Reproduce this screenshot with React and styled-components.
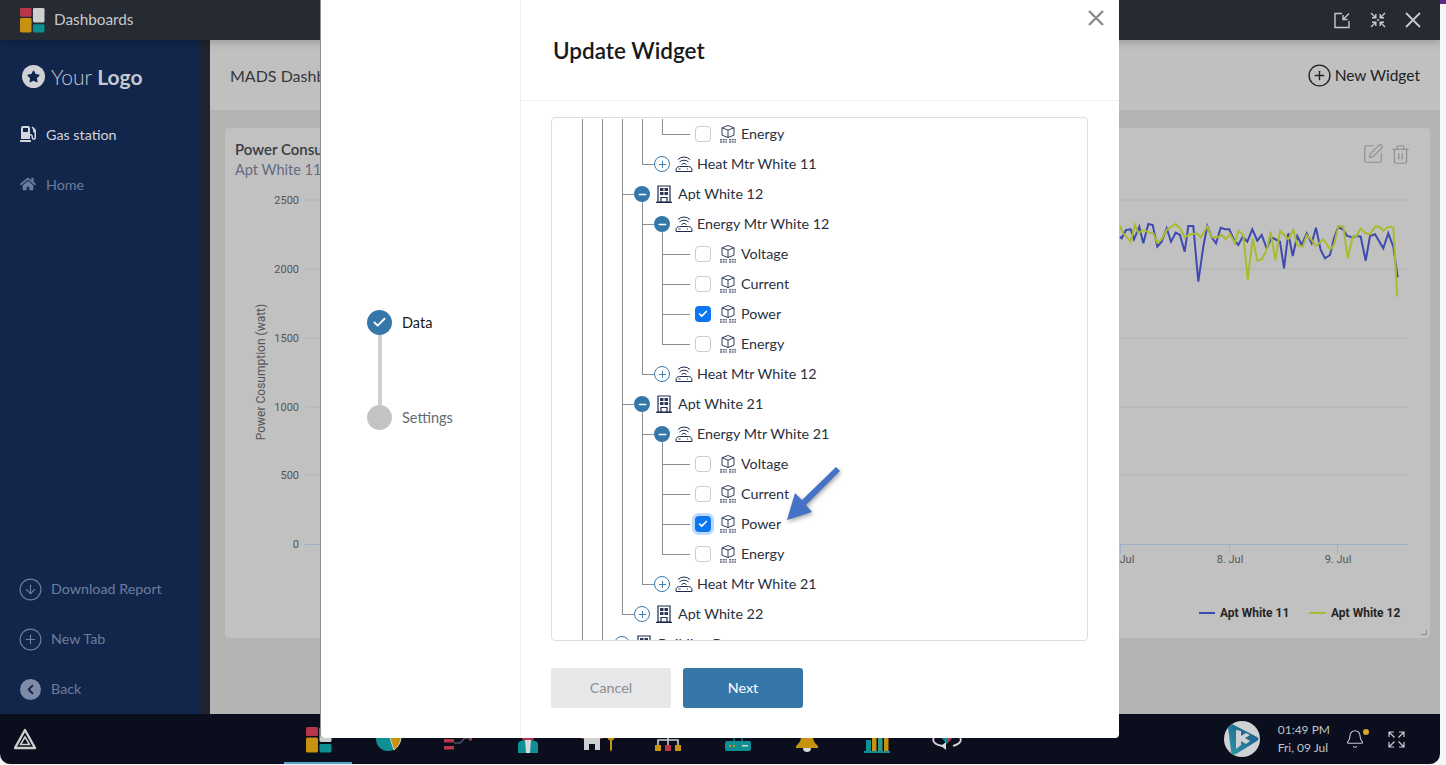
import styled, { createGlobalStyle } from 'styled-components'
import { Bell, CirclePlus, CircleArrowDown, ChevronLeft, Plus, Minus, Check, SquarePen, Trash2 } from 'lucide-react'
import { FaGasPump, FaHome, FaStar } from 'react-icons/fa'

const GlobalStyle = createGlobalStyle`
  html, body { margin: 0; padding: 0; height: 100%; overflow: hidden; background: #f6f6f6; }
  * { box-sizing: border-box; }
  body { font-family: Lato, "Noto Sans", sans-serif; }
`

const UI = "Lato, 'Noto Sans', sans-serif"

const Page = styled.div`
  position: relative;
  width: 1446px;
  height: 765px;
  display: flex;
  background: #f6f6f6;
`
const Window = styled.div`
  width: 1440px;
  height: 764px;
  display: flex;
  flex-direction: column;
  border-radius: 0 0 10px 10px;
  overflow: hidden;
`
const RightEdge = styled.div`
  width: 6px;
  height: 4px;
  background: #5b2c83;
`
const TopBar = styled.div`
  height: 40px;
  flex: none;
  display: flex;
  align-items: center;
  padding: 0 19px 0 20px;
  background: #262a33;
  color: #c8c8c8;
  box-shadow: 0 3px 8px rgba(0, 0, 0, 0.18);
  z-index: 2;
`
const TopTitle = styled.div`
  margin: 0 0 2px 9px;
  font-size: 15.3px;
`
const TopActions = styled.div`
  margin-left: auto;
  display: flex;
  align-items: center;
  gap: 19px;
  svg { display: block; }
`
const Body = styled.div`
  flex: 1;
  display: flex;
  min-height: 0;
`
const Sidebar = styled.aside`
  width: 200px;
  flex: none;
  display: flex;
  flex-direction: column;
  background: #12264c;
`
const Brand = styled.div`
  height: 70px;
  display: flex;
  align-items: center;
  gap: 6px;
  padding: 3px 0 0 22px;
  font-size: 21px;
  font-weight: 300;
  color: #c4c8cf;
  b { font-weight: 700; }
`
const BrandMark = styled.span`
  width: 23px;
  height: 23px;
  border-radius: 50%;
  background: #cfd1d6;
  color: #12264c;
  display: flex;
  align-items: center;
  justify-content: center;
`
const NavItem = styled.div`
  height: 50px;
  display: flex;
  align-items: center;
  gap: 10px;
  padding: 0 0 2px 20px;
  font-size: 14.3px;
  color: ${p => p.$active ? '#d3d6dc' : '#6e7c9b'};
`
const SideFoot = styled.div`
  margin-top: auto;
`
const FootGlyph = styled.span`
  width: 21px;
  height: 21px;
  margin-top: 2px;
  flex: none;
  display: flex;
  align-items: center;
  justify-content: center;
  svg { flex: none; }
`
const BackDot = styled(FootGlyph)`
  border-radius: 50%;
  background: #7f8aa8;
  color: #12264c;
`
const Gutter = styled.div`
  width: 10px;
  flex: none;
  background: #1f2430;
`
const Content = styled.main`
  flex: 1;
  display: flex;
  flex-direction: column;
  min-width: 0;
  background: #b4b4b4;
`
const ContentHead = styled.div`
  height: 70px;
  flex: none;
  display: flex;
  align-items: center;
  justify-content: space-between;
  padding: 0 20px;
  background: #c0c0c0;
  color: #33373d;
`
const HeadTitle = styled.div`
  font-size: 16px;
`
const NewWidget = styled.div`
  display: flex;
  align-items: center;
  gap: 3px;
  font-size: 15.5px;
  color: #202226;
`
const Canvas = styled.div`
  flex: 1;
  padding: 18px 10px 0 15px;
`
const Card = styled.section`
  height: 510px;
  border-radius: 4px;
  background: #c1c1c1;
`
const CardHead = styled.div`
  height: 60px;
  display: flex;
  justify-content: space-between;
  padding: 12px 19px 0 10px;
`
const CardTitle = styled.div`
  font-size: 15px;
  font-weight: 600;
  color: #383b42;
`
const CardSub = styled.div`
  margin-top: 3px;
  font-size: 14.5px;
  color: #646c80;
`
const CardTools = styled.div`
  display: flex;
  align-items: center;
  align-self: flex-start;
  gap: 6px;
  padding-top: 3px;
  color: #8f8f8f;
`
const ChartSvg = styled.svg`
  display: block;
  width: 1205px;
  height: 450px;
  font-family: Roboto, sans-serif;
`
const Taskbar = styled.footer`
  height: 50px;
  flex: none;
  display: flex;
  align-items: stretch;
  background: #0b0f1d;
`
const StartSlot = styled.div`
  width: 284px;
  flex: none;
  display: flex;
  align-items: center;
  padding: 0 0 0 13px;
`
const TaskList = styled.div`
  display: flex;
`
const TaskItem = styled.div`
  width: 69.8px;
  display: flex;
  justify-content: center;
  padding-top: 13px;
  background: ${p => p.$active ? 'linear-gradient(#5ba4c9, #5ba4c9) 0 100% / 68px 2px no-repeat' : 'none'};
`
const TaskTray = styled.div`
  margin-left: auto;
  display: flex;
  align-items: center;
  padding: 0 35px 0 0;
  color: #c8ccd2;
`
const Avatar = styled.div`
  width: 36px;
  height: 36px;
  border-radius: 50%;
  background: #cfd2d4;
  overflow: hidden;
  svg { display: block; }
`
const Clock = styled.div`
  margin: 0 15px 0 18px;
  font-size: 12px;
  line-height: 18px;
  color: #bfc4cb;
`
const BellWrap = styled.div`
  position: relative;
  display: flex;
  margin-right: 23px;
`
const BellDot = styled.span`
  position: absolute;
  top: 0;
  right: -4px;
  width: 6px;
  height: 6px;
  border-radius: 50%;
  background: #e0a526;
`

const Modal = styled.div`
  position: absolute;
  left: 321px;
  top: 0;
  width: 798px;
  height: 738px;
  display: flex;
  background: #fff;
  border-radius: 0 0 4px 4px;
  box-shadow: -1px 0 0 #8e8e8e;
  z-index: 5;
`
const StepPane = styled.div`
  width: 200px;
  flex: none;
  display: flex;
  flex-direction: column;
  justify-content: center;
  padding: 2px 0 0 46px;
  border-right: 1px solid #f0f0f0;
`
const Step = styled.div`
  display: flex;
  align-items: center;
  gap: 10px;
  font-size: 14.5px;
  color: ${p => p.$done ? '#17191c' : '#666b73'};
`
const StepDot = styled.span`
  width: 25px;
  height: 25px;
  flex: none;
  border-radius: 50%;
  display: flex;
  align-items: center;
  justify-content: center;
  color: #fff;
  background: ${p => p.$done ? '#3677aa' : '#c4c4c4'};
`
const StepLine = styled.div`
  width: 4px;
  height: 70px;
  margin-left: 10.5px;
  background: #cfcfcf;
`
const ModalMain = styled.div`
  flex: 1;
  display: flex;
  flex-direction: column;
  min-width: 0;
`
const ModalHead = styled.div`
  height: 101px;
  flex: none;
  display: flex;
  align-items: center;
  padding: 0 0 0 32px;
  border-bottom: 1px solid #f0f0f0;
  font-size: 22.5px;
  font-weight: 600;
  color: #17191c;
`
const CloseBtn = styled.button`
  position: absolute;
  top: 10px;
  right: 15px;
  border: 0;
  padding: 0;
  display: flex;
  background: none;
  color: #8b8b8b;
`
const ModalBody = styled.div`
  padding: 16px 31px 0 30px;
`
const TreeBox = styled.div`
  height: 524px;
  padding: 1px 0 0 30px;
  border: 1px solid #dedede;
  border-radius: 4px;
  overflow: hidden;
  font-size: 14.3px;
  color: #2a3040;
`
const TreeRow = styled.div`
  height: 30px;
  display: flex;
  align-items: center;
  white-space: nowrap;
`
const NodeLabel = styled.span`
  margin-bottom: 1px;
`
const LINE = '#8b8f94'
const Guide = styled.span`
  flex: none;
  height: 30px;
  width: ${p => p.$width}px;
  background:
    linear-gradient(${LINE}, ${LINE}) 0 0 / 1px ${p => p.$half ? '16px' : '30px'} no-repeat,
    linear-gradient(${LINE}, ${LINE}) 0 15px / ${p => p.$reach || 0}px 1px no-repeat;
`
const Toggle = styled.span`
  position: relative;
  width: 16px;
  height: 16px;
  flex: none;
  border-radius: 50%;
  display: flex;
  align-items: center;
  justify-content: center;
  border: ${p => p.$open ? '0' : '1.5px solid #3677aa'};
  background: ${p => p.$open ? '#3677aa' : '#fff'};
  color: ${p => p.$open ? '#fff' : '#3677aa'};
  ${p => p.$open && `
    &::after {
      content: '';
      position: absolute;
      left: 8px;
      top: 16px;
      width: 1px;
      height: 7px;
      background: ${LINE};
    }
  `}
`
const NodeIcon = styled.span`
  display: flex;
  flex: none;
  margin: 0 ${p => p.$after}px 0 ${p => p.$before}px;
  color: #1f2b4d;
`
const CheckBox = styled.span`
  width: 16px;
  height: 16px;
  flex: none;
  border-radius: 4px;
  display: flex;
  align-items: center;
  justify-content: center;
  color: #fff;
  border: ${p => p.$on ? '0' : '1px solid #c9ccd1'};
  background: ${p => p.$on ? '#0b76ef' : '#fff'};
  box-shadow: ${p => p.$focus ? '0 0 0 3px #bcd8fb' : 'none'};
`
const Actions = styled.div`
  display: flex;
  gap: 12px;
  margin-top: 27px;
`
const Btn = styled.button`
  width: 120px;
  height: 40px;
  border: 0;
  border-radius: 3px;
  padding: 0 0 2px;
  font-family: ${UI};
  font-size: 14.3px;
  background: ${p => p.$primary ? '#3677aa' : '#e6e7e9'};
  color: ${p => p.$primary ? '#fff' : '#8a8c90'};
`
const ArrowMark = styled.svg`
  position: absolute;
  left: 462px;
  top: 464px;
  width: 60px;
  height: 62px;
  filter: drop-shadow(1px 2px 2px rgba(0, 0, 0, 0.35));
`

const AppsLogo = ({ size = 26 }) => (
  <svg width={size} height={size} viewBox="0 0 26 26">
    <rect x="0" y="0" width="12" height="9" rx="1.5" fill="#b8364a" />
    <rect x="0" y="10.5" width="12" height="15" rx="1.5" fill="#c6920f" />
    <rect x="13.5" y="0" width="12" height="15" rx="1.5" fill="#cfcfcf" />
    <rect x="13.5" y="17" width="12" height="8.5" rx="1.5" fill="#0e8f94" />
  </svg>
)

const CrossIcon = ({ stroke = 1.8 }) => (
  <svg width="16" height="16" viewBox="0 0 16 16" fill="none" stroke="currentColor" strokeWidth={stroke}>
    <path d="M1 1l14 14M15 1 1 15" />
  </svg>
)
const PopOut = () => (
  <svg width="17" height="17" viewBox="0 0 17 17" fill="none" stroke="#c8c8c8" strokeWidth="1.4">
    <path d="M8 1.500H1v14h14V9" />
    <path d="M15 1.500 9 7.500M9 3v4.500h4.500" />
  </svg>
)
const Shrink = () => (
  <svg width="16" height="16" viewBox="0 0 16 16" fill="none" stroke="#c8c8c8" strokeWidth="1.4">
    <path d="M1 1l4.500 4.500M2 5.800h3.800V2M15 1l-4.500 4.500M14 5.800h-3.800V2M1 15l4.500-4.500M2 10.200h3.800V14M15 15l-4.500-4.500M14 10.200h-3.800V14" />
    <circle cx="8" cy="8" r="1" fill="#c8c8c8" stroke="none" />
  </svg>
)
const Enlarge = () => (
  <svg width="17" height="17" viewBox="0 0 17 17" fill="none" stroke="currentColor" strokeWidth="1.2">
    <path d="M1 6V1h5M1 1l5.500 5.500M16 6V1h-5M16 1l-5.500 5.500M1 11v5h5M1 16l5.500-5.500M16 11v5h-5M16 16l-5.500-5.500" />
  </svg>
)

const MeterIcon = () => (
  <svg width="18" height="18" viewBox="0 0 18 18" fill="none" stroke="currentColor" strokeWidth="1">
    <path d="M1 16.500h16v-1.500c0-2-1.500-3.500-3.500-3.500h-9C2.500 11.500 1 13 1 15z" />
    <path d="M3.500 14h2M12 14h1" />
    <path d="M6.500 9.500a3.500 3.500 0 0 1 5 0M4.500 7a6.500 6.500 0 0 1 9 0M3 4.500a8.500 8.500 0 0 1 12 0" />
  </svg>
)
const BuildingIcon = () => (
  <svg width="16" height="18" viewBox="0 0 16 18">
    <path d="M2 1h12v16H2z" fill="none" stroke="currentColor" strokeWidth="1.200" />
    <path d="M0 17.300h16" stroke="currentColor" strokeWidth="1.200" />
    <path d="M4 3h3.500v3H4zM8.500 3H12v3H8.500zM4 7h3.500v3H4zM8.500 7H12v3H8.500z" fill="#2c3857" />
    <path d="M5 17v-4.500h6V17" fill="none" stroke="currentColor" strokeWidth="1.200" />
  </svg>
)
const PointIcon = () => (
  <svg width="16" height="18" viewBox="0 0 16 18" fill="none" stroke="currentColor" strokeWidth="0.9">
    <path d="M8 .5l6 2.300v7.400l-6 2.300-6-2.300V2.800z" />
    <path d="M2 2.800l6 2.300 6-2.300M8 5.100v7.400" />
    <path d="M0 14.800h7M9 14.800h7M0 17h7M9 17h7" strokeWidth="1" strokeDasharray="2 0.700" />
  </svg>
)

const StartIcon = () => (
  <svg width="24" height="22" viewBox="0 0 24 22" fill="none" stroke="#d0d0d0">
    <path d="M12 2 22 20H2z" strokeWidth="2.400" strokeLinejoin="round" />
    <path d="M12 9l4.500 7.500h-9z" strokeWidth="1.500" />
  </svg>
)
const TaskIcons = [
  <AppsLogo key="apps" />,
  <svg key="pie" width="26" height="26" viewBox="0 0 26 26">
    <circle cx="12" cy="12" r="12" fill="#0e8f94" />
    <path d="M13 8h12c.5 7-3 12-7 15z" fill="#c6920f" stroke="#cfcfcf" />
  </svg>,
  <svg key="flow" width="28" height="26" viewBox="0 0 28 26" fill="none">
    <rect x="0" y="5" width="10" height="3.500" fill="#b8364a" />
    <rect x="0" y="12" width="10" height="3.500" fill="#b8364a" />
    <rect x="0" y="19" width="10" height="3.500" fill="#b8364a" />
    <path d="M10 16h6l5-5h6" stroke="#4a5060" strokeWidth="1.500" />
    <rect x="25" y="9.500" width="3" height="4" fill="#b8364a" />
  </svg>,
  <svg key="person" width="20" height="26" viewBox="0 0 20 26">
    <circle cx="10" cy="8" r="7" fill="#b8364a" />
    <path d="M0 26V17c0-2 3-4 10-4s10 2 10 4v9z" fill="#0e8f94" />
    <path d="M7 13h6l-1 13H8z" fill="#d8d8d8" />
  </svg>,
  <svg key="home" width="34" height="26" viewBox="0 0 34 26">
    <path d="M0 12 11 2l11 10z" fill="#b8364a" />
    <path d="M3 23V11h16v12h-5v-6H8v6z" fill="#cfcfcf" />
    <circle cx="30" cy="10" r="3.500" fill="#c6920f" />
    <path d="M29 12h2v11l-1 1.500-1-1.500z" fill="#c6920f" />
  </svg>,
  <svg key="org" width="26" height="26" viewBox="0 0 26 26">
    <path d="M3 18v-5h20v5M13 8v10" fill="none" stroke="#cfcfcf" strokeWidth="1.600" />
    <rect x="0" y="18" width="6" height="6" fill="#c6920f" />
    <rect x="10" y="18" width="6" height="6" fill="#b8364a" />
    <rect x="20" y="18" width="6" height="6" fill="#c6920f" />
  </svg>,
  <svg key="router" width="26" height="26" viewBox="0 0 26 26">
    <path d="M9 6v10M17 6v10" stroke="#0e8f94" strokeWidth="1.200" />
    <rect x="0" y="14" width="26" height="10" rx="2" fill="#0e8f94" />
    <rect x="4" y="18" width="2" height="2" fill="#c6920f" />
    <rect x="8" y="18" width="2" height="2" fill="#c6920f" />
    <rect x="17" y="18" width="6" height="1.500" fill="#d8d8d8" />
  </svg>,
  <svg key="bell" width="22" height="26" viewBox="0 0 22 26">
    <path d="M11 0c5 0 6 5 6 10 0 4 2 6 5 9v2H0v-2c3-3 5-5 5-9 0-5 1-10 6-10z" fill="#c6920f" />
    <path d="M7 21h8c0 3-2 4-4 4s-4-1-4-4z" fill="#d8d8d8" />
  </svg>,
  <svg key="bars" width="26" height="26" viewBox="0 0 26 26">
    <rect x="2" y="13" width="5" height="12" fill="#0e8f94" />
    <rect x="8" y="5" width="4.500" height="20" fill="#c6920f" />
    <rect x="14" y="10" width="4.500" height="15" fill="#2f9c85" />
    <rect x="20" y="3" width="4.500" height="22" fill="#c6920f" />
    <rect x="0" y="24" width="26" height="2" fill="#0e8f94" />
  </svg>,
  <svg key="cycle" width="30" height="26" viewBox="0 0 30 26" fill="none">
    <path d="M15 4 7 8l8 9z" fill="#0e8f94" />
    <path d="M15 4l8 4-8 9z" fill="#b8364a" />
    <path d="M7 7C2 9 0 12 2 15c2 3 7 4 12 4M23 7c5 2 7 5 5 8-1 2-4 3-7 4" stroke="#d8d8d8" strokeWidth="1.800" />
    <path d="M14 15v8l-5-4z" fill="#d8d8d8" />
  </svg>,
]

const rows = [
  { type: 'leaf', label: 'Energy', last: true },
  { type: 'meter', label: 'Heat Mtr White 11', last: true },
  { type: 'apt', label: 'Apt White 12', open: true },
  { type: 'meter', label: 'Energy Mtr White 12', open: true },
  { type: 'leaf', label: 'Voltage' },
  { type: 'leaf', label: 'Current' },
  { type: 'leaf', label: 'Power', on: true },
  { type: 'leaf', label: 'Energy', last: true },
  { type: 'meter', label: 'Heat Mtr White 12', last: true },
  { type: 'apt', label: 'Apt White 21', open: true },
  { type: 'meter', label: 'Energy Mtr White 21', open: true },
  { type: 'leaf', label: 'Voltage' },
  { type: 'leaf', label: 'Current' },
  { type: 'leaf', label: 'Power', on: true, focus: true },
  { type: 'leaf', label: 'Energy', last: true },
  { type: 'meter', label: 'Heat Mtr White 21', last: true },
  { type: 'apt', label: 'Apt White 22', last: true },
  { type: 'building', label: 'Building B' },
]

const depths = { building: 1, apt: 2, meter: 3, leaf: 4 }

const Row = ({ row }) => {
  const depth = depths[row.type]
  const leaf = row.type === 'leaf'
  return (
    <TreeRow>
      {Array.from({ length: depth }, (_, i) => <Guide key={i} $width={20} />)}
      <Guide $width={leaf ? 33 : 12} $reach={leaf ? 28 : 12} $half={row.last} />
      {leaf ? (
        <>
          <CheckBox $on={row.on} $focus={row.focus}>
            {row.on && <Check size={10} strokeWidth={4} />}
          </CheckBox>
          <NodeIcon $before={9} $after={5}><PointIcon /></NodeIcon>
        </>
      ) : (
        <>
          <Toggle $open={row.open}>
            {row.open ? <Minus size={11} strokeWidth={3.5} /> : <Plus size={11} strokeWidth={2} />}
          </Toggle>
          {row.type === 'meter'
            ? <NodeIcon $before={5} $after={4}><MeterIcon /></NodeIcon>
            : <NodeIcon $before={6} $after={6}><BuildingIcon /></NodeIcon>}
        </>
      )}
      <NodeLabel>{row.label}</NodeLabel>
    </TreeRow>
  )
}

// traced from the visible right part of the chart, x = 1110 + zx / 3, y = zy / 3
const blue = [30,710,35,715,48,690,62,688,72,718,88,680,100,730,115,672,128,675,142,740,155,725,170,685,183,725,197,698,210,705,224,755,235,678,250,678,265,845,280,740,292,678,305,712,318,730,332,683,345,688,358,688,372,720,385,735,398,710,412,725,427,688,442,722,455,705,470,745,485,712,500,720,510,725,522,805,535,700,548,768,562,708,575,735,590,700,605,730,618,683,632,750,645,775,660,765,672,715,685,680,700,690,712,708,725,712,740,708,752,710,767,782,780,708,795,703,820,745,835,700,850,740,863,832]
const green = [30,678,40,700,62,725,75,675,85,700,100,690,120,698,130,700,142,728,155,718,170,690,197,672,210,685,224,712,235,705,260,700,272,712,292,680,305,712,322,712,335,705,348,718,360,702,375,730,385,692,400,705,413,840,428,715,442,782,455,778,470,750,482,695,496,780,510,692,535,718,550,690,562,735,578,740,590,705,605,720,618,738,640,718,660,748,672,735,685,678,700,680,713,775,728,710,740,708,752,685,767,700,780,703,795,680,808,680,820,692,835,680,850,682,862,890]

const toPoints = arr => {
  const out = []
  for (let i = 0; i < arr.length; i += 2) {
    out.push(`${(1110 + arr[i] / 3).toFixed(1)},${(arr[i + 1] / 3).toFixed(1)}`)
  }
  return out.join(' ')
}

const ticks = [
  { y: 200, label: '2500' },
  { y: 269, label: '2000' },
  { y: 338, label: '1500' },
  { y: 407, label: '1000' },
  { y: 475, label: '500' },
]

const Chart = () => (
  <ChartSvg viewBox="225 188 1205 450">
    {ticks.map(t => (
      <g key={t.y}>
        <line x1="305" x2="1408" y1={t.y} y2={t.y} stroke="#b2b2b2" />
        <text x="299" y={t.y + 4} textAnchor="end" fontSize="11" fill="#555">{t.label}</text>
      </g>
    ))}
    <text x="299" y="548" textAnchor="end" fontSize="11" fill="#555">0</text>
    <text transform="translate(265 372) rotate(-90)" textAnchor="middle" fontSize="12" fill="#555">Power Cosumption (watt)</text>
    <line x1="305" x2="1408" y1="544.500" y2="544.500" stroke="#9fb0c8" />
    {[1120.500, 1229.500, 1337.500].map(x => (
      <line key={x} x1={x} x2={x} y1="544" y2="554" stroke="#9fb0c8" />
    ))}
    <text x="1121" y="563" textAnchor="middle" fontSize="11" fill="#555">7. Jul</text>
    <text x="1230" y="563" textAnchor="middle" fontSize="11" fill="#555">8. Jul</text>
    <text x="1338" y="563" textAnchor="middle" fontSize="11" fill="#555">9. Jul</text>
    <polyline points={toPoints(blue)} fill="none" stroke="#3f4ab0" strokeWidth="2" />
    <polyline points={toPoints(green)} fill="none" stroke="#a9bb2e" strokeWidth="2" />
    <line x1="1199" x2="1215" y1="613" y2="613" stroke="#3f4ab0" strokeWidth="2" />
    <text x="1220" y="617" fontSize="12" fontWeight="700" fill="#262626">Apt White 11</text>
    <line x1="1309" x2="1326" y1="613" y2="613" stroke="#a9bb2e" strokeWidth="2" />
    <text x="1331" y="617" fontSize="12" fontWeight="700" fill="#262626">Apt White 12</text>
    <path d="M1426.500 630v4.500H1421" fill="none" stroke="#8c8c8c" />
  </ChartSvg>
)

export default function App() {
  return (
    <Page>
      <GlobalStyle />
      <Window>
        <TopBar>
          <AppsLogo size={25} />
          <TopTitle>Dashboards</TopTitle>
          <TopActions>
            <PopOut />
            <Shrink />
            <CrossIcon />
          </TopActions>
        </TopBar>
        <Body>
          <Sidebar>
            <Brand>
              <BrandMark><FaStar size={13} /></BrandMark>
              <span>Your <b>Logo</b></span>
            </Brand>
            <NavItem $active><FaGasPump size={16} />Gas station</NavItem>
            <NavItem><FaHome size={16} />Home</NavItem>
            <SideFoot>
              <NavItem><FootGlyph><CircleArrowDown size={25} strokeWidth={1.1} /></FootGlyph>Download Report</NavItem>
              <NavItem><FootGlyph><CirclePlus size={25} strokeWidth={1.1} /></FootGlyph>New Tab</NavItem>
              <NavItem><BackDot><ChevronLeft size={15} strokeWidth={3} /></BackDot>Back</NavItem>
            </SideFoot>
          </Sidebar>
          <Gutter />
          <Content>
            <ContentHead>
              <HeadTitle>MADS Dashboard</HeadTitle>
              <NewWidget><CirclePlus size={25} strokeWidth={1.3} />New Widget</NewWidget>
            </ContentHead>
            <Canvas>
              <Card>
                <CardHead>
                  <div>
                    <CardTitle>Power Consumption</CardTitle>
                    <CardSub>Apt White 11</CardSub>
                  </div>
                  <CardTools>
                    <SquarePen size={22} strokeWidth={1.3} />
                    <Trash2 size={21} strokeWidth={1.4} />
                  </CardTools>
                </CardHead>
                <Chart />
              </Card>
            </Canvas>
          </Content>
        </Body>
        <Taskbar>
          <StartSlot><StartIcon /></StartSlot>
          <TaskList>
            {TaskIcons.map((icon, i) => <TaskItem key={i} $active={i === 0}>{icon}</TaskItem>)}
          </TaskList>
          <TaskTray>
            <Avatar>
              <svg width="36" height="36" viewBox="0 0 36 36">
                <defs>
                  <linearGradient id="avatarMark" x1="0" y1="1" x2="1" y2="0">
                    <stop offset="0" stopColor="#2a9aa8" />
                    <stop offset="1" stopColor="#1c4f86" />
                  </linearGradient>
                </defs>
                <path d="M4 6c0-3 2-4 4-3l25 13c2 1 2 3 0 4L12 33c-3 1-5 0-5-3z" fill="url(#avatarMark)" />
                <path d="M12 9v19l5-4v-4l5 3 4-3-5-3 5-3-4-2-5 3v-5z" fill="#cfd2d4" />
              </svg>
            </Avatar>
            <Clock>01:49 PM<br />Fri, 09 Jul</Clock>
            <BellWrap>
              <Bell size={20} strokeWidth={1.3} />
              <BellDot />
            </BellWrap>
            <Enlarge />
          </TaskTray>
        </Taskbar>
      </Window>
      <RightEdge />
      <Modal>
        <StepPane>
          <Step $done><StepDot $done><Check size={15} strokeWidth={3} /></StepDot>Data</Step>
          <StepLine />
          <Step><StepDot />Settings</Step>
        </StepPane>
        <ModalMain>
          <ModalHead>Update Widget</ModalHead>
          <ModalBody>
            <TreeBox>
              {rows.map((row, i) => <Row key={i} row={row} />)}
            </TreeBox>
            <Actions>
              <Btn>Cancel</Btn>
              <Btn $primary>Next</Btn>
            </Actions>
          </ModalBody>
        </ModalMain>
        <CloseBtn><CrossIcon stroke={2.4} /></CloseBtn>
        <ArrowMark viewBox="0 0 60 62">
          <path d="M4 56 12 29 19 36 53 3 57 7 23 41 29 48z" fill="#4472c4" />
        </ArrowMark>
      </Modal>
    </Page>
  )
}
